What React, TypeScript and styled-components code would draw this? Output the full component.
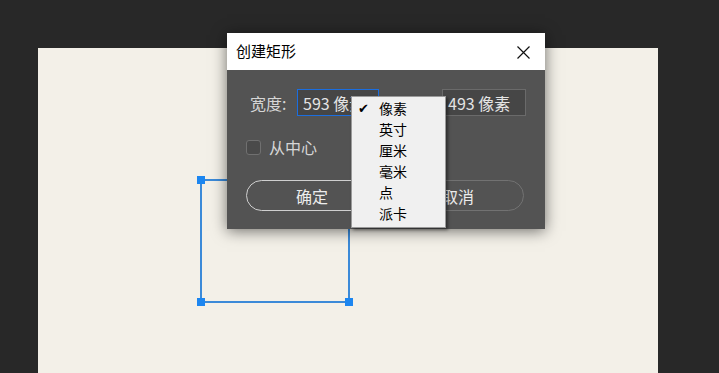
import styled, { createGlobalStyle } from 'styled-components';

const GlobalStyle = createGlobalStyle`
  html, body {
    margin: 0;
    padding: 0;
    background: #282828;
  }
  body {
    font-family: 'Noto Sans CJK SC', 'Noto Sans', sans-serif;
  }
`;

const units = ['像素', '英寸', '厘米', '毫米', '点', '派卡'];

export default function App() {
  return (
    <>
      <GlobalStyle />
      <StyledPage>
        <StyledArtboard>
          <StyledSelection>
            <StyledHandle corner="tl" />
            <StyledHandle corner="tr" />
            <StyledHandle corner="bl" />
            <StyledHandle corner="br" />
          </StyledSelection>
        </StyledArtboard>

        <StyledDialog>
          <StyledTitleBar>
            <StyledTitle>创建矩形</StyledTitle>
            <StyledClose>
              <svg width="13" height="13" viewBox="0 0 13 13">
                <path d="M0.5 0.5 L12.5 12.5 M12.5 0.5 L0.5 12.5" stroke="#111" strokeWidth="1.2" />
              </svg>
            </StyledClose>
          </StyledTitleBar>
          <StyledBody>
            <StyledSizeRow>
              <StyledFieldLabel>宽度:</StyledFieldLabel>
              <StyledInput focused={true} width={82}>593 像素</StyledInput>
              <StyledFieldLabel gap={16}>高度:</StyledFieldLabel>
              <StyledInput focused={false} width={84}>493 像素</StyledInput>
            </StyledSizeRow>
            <StyledCheckRow>
              <StyledCheckbox />
              <StyledLabel>从中心</StyledLabel>
            </StyledCheckRow>
            <StyledButtonRow>
              <StyledButton primary={true}>确定</StyledButton>
              <StyledButton primary={false}>取消</StyledButton>
            </StyledButtonRow>
          </StyledBody>

          <StyledMenu>
            {units.map((u, i) => (
              <StyledMenuItem key={u}>
                {i === 0 && <StyledCheck>✔</StyledCheck>}
                {u}
              </StyledMenuItem>
            ))}
          </StyledMenu>
        </StyledDialog>
      </StyledPage>
    </>
  );
}

const StyledPage = styled.div`
  position: relative;
  width: 719px;
  height: 373px;
  overflow: hidden;
  box-sizing: border-box;
  padding: 48px 0 0 38px;
  background: #282828;
`;

const StyledArtboard = styled.div`
  position: relative;
  width: 620px;
  height: 325px;
  background: #f3f0e8;
`;

const StyledSelection = styled.div`
  position: absolute;
  left: 162px;
  top: 131px;
  width: 146px;
  height: 120px;
  border: 2px solid #3b8ad8;
`;

const StyledHandle = styled.div<{ corner: string }>`
  position: absolute;
  width: 8px;
  height: 8px;
  background: #1c86f0;
  ${({ corner }) => (corner[0] === 't' ? 'top: -5px;' : 'bottom: -5px;')}
  ${({ corner }) => (corner[1] === 'l' ? 'left: -5px;' : 'right: -5px;')}
`;

const StyledDialog = styled.div`
  position: absolute;
  left: 227px;
  top: 33px;
  width: 318px;
  height: 196px;
  background: #535353;
  box-shadow: 0 2px 14px rgba(0, 0, 0, 0.55);
  display: flex;
  flex-direction: column;
`;

const StyledTitleBar = styled.div`
  height: 37px;
  background: #ffffff;
  display: flex;
  align-items: center;
  justify-content: space-between;
  padding: 0 15px 0 9px;
`;

const StyledTitle = styled.span`
  font-size: 15px;
  line-height: 20px;
  color: #000;
  margin-top: -1px;
`;

const StyledClose = styled.span`
  display: flex;
  width: 13px;
  height: 13px;
  margin-top: 1px;
`;

const StyledBody = styled.div`
  padding: 19px 21px 0 19px;
  display: flex;
  flex-direction: column;
`;

const StyledSizeRow = styled.div`
  display: flex;
  align-items: center;
  height: 27px;
  padding-left: 4px;
`;

const StyledLabel = styled.span`
  font-size: 16px;
  line-height: 20px;
  color: #d6d6d6;
  white-space: nowrap;
`;

const StyledFieldLabel = styled(StyledLabel)<{ gap?: number }>`
  width: 41px;
  margin-right: 6px;
  margin-left: ${({ gap }) => gap || 0}px;
  flex-shrink: 0;
`;

const StyledInput = styled.div<{ focused: boolean; width: number }>`
  box-sizing: border-box;
  width: ${({ width }) => width}px;
  flex-shrink: 0;
  height: 27px;
  padding-left: 5px;
  display: flex;
  align-items: center;
  font-size: 16px;
  color: #e4e4e4;
  background: #464646;
  border: 1px solid ${({ focused }) => (focused ? '#1b6ee0' : '#6a6a6a')};
  white-space: nowrap;
  overflow: hidden;
`;

const StyledCheckRow = styled.div`
  display: flex;
  align-items: center;
  margin-top: 21px;
  height: 20px;
`;

const StyledCheckbox = styled.div`
  box-sizing: border-box;
  width: 15px;
  height: 15px;
  border: 1px solid #707070;
  border-radius: 3px;
  background: #4a4a4a;
  margin-right: 8px;
`;

const StyledButtonRow = styled.div`
  display: flex;
  gap: 14px;
  margin-top: 23px;
`;

const StyledButton = styled.div<{ primary: boolean }>`
  box-sizing: border-box;
  width: 132px;
  height: 31px;
  border-radius: 16px;
  border: 1.5px solid ${({ primary }) => (primary ? '#cfcfcf' : '#727272')};
  display: flex;
  align-items: center;
  justify-content: center;
  font-size: 16px;
  color: #ececec;
`;

const StyledMenu = styled.div`
  position: absolute;
  left: 124px;
  top: 63px;
  width: 95px;
  box-sizing: border-box;
  padding: 1px 0 3px;
  background: #f0f0f0;
  border: 1px solid #9a9a9a;
  box-shadow: 2px 2px 3px rgba(0, 0, 0, 0.45);
`;

const StyledMenuItem = styled.div`
  position: relative;
  height: 21px;
  line-height: 21px;
  padding-left: 27px;
  font-size: 14px;
  color: #000;
`;

const StyledCheck = styled.span`
  position: absolute;
  left: 6px;
  top: 0;
  font-size: 13px;
  font-weight: bold;
  font-family: 'DejaVu Sans', sans-serif;
`;
